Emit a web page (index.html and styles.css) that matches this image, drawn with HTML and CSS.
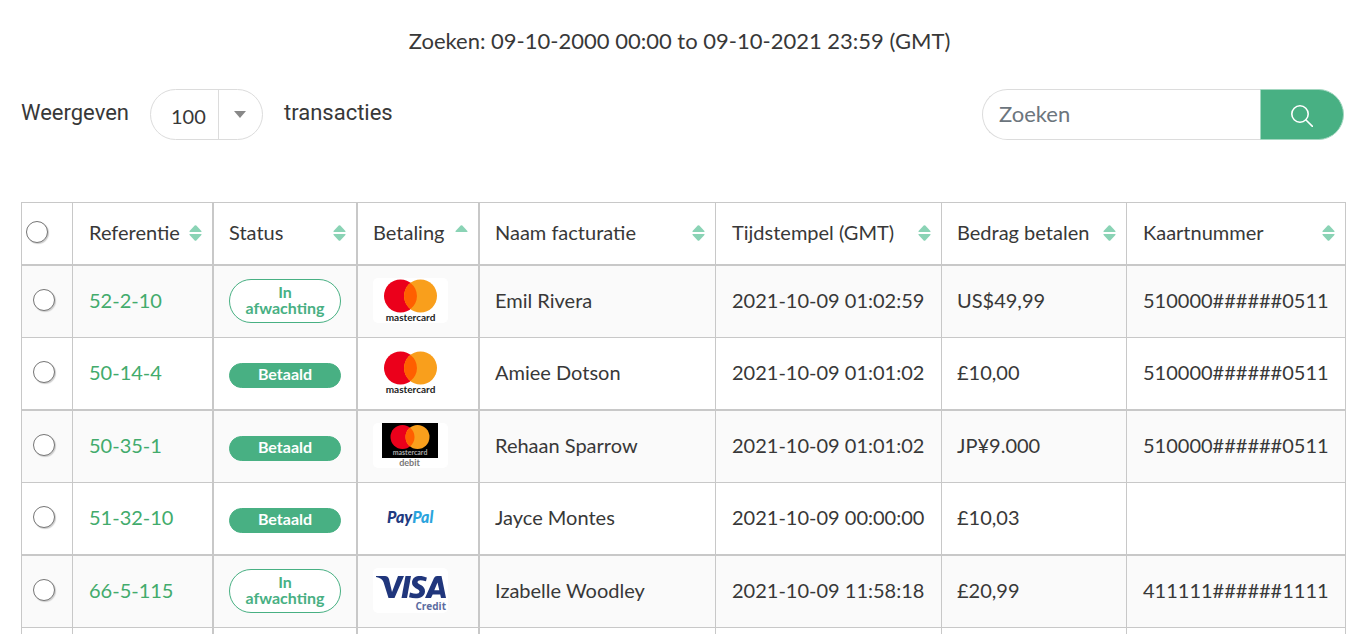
FILE: index.html
```html
<!DOCTYPE html>
<html lang="nl">
<head>
<meta charset="utf-8">
<title>Transacties</title>
<link rel="stylesheet" href="styles.css">
</head>
<body>
<svg width="0" height="0" class="defs" aria-hidden="true">
  <symbol id="sort" viewBox="0 0 13 16">
    <path d="M1 7 Q0 7 .6 6 L5.7.5 Q6.5 0 7.3.5L12.4 6 Q13 7 12 7Z"/>
    <path d="M1 9 Q0 9 .6 10 L5.7 15.5 Q6.5 16 7.3 15.5 L12.4 10 Q13 9 12 9Z"/>
  </symbol>
  <symbol id="sort-up" viewBox="0 0 13 16">
    <path d="M1 7 Q0 7 .6 6 L5.7.5 Q6.5 0 7.3.5 L12.4 6 Q13 7 12 7Z"/>
  </symbol>
</svg>

<main class="page">
  <p class="range">Zoeken: 09-10-2000 00:00 to 09-10-2021 23:59 (GMT)</p>

  <div class="toolbar">
    <div class="length">
      <label for="length">Weergeven</label>
      <div class="length-box">
        <select id="length"><option>100</option></select>
        <span class="length-arrow"><svg width="12" height="7" viewBox="0 0 12 7" aria-hidden="true"><path d="M0 0h12L6 7z"/></svg></span>
      </div>
      <span>transacties</span>
    </div>
    <form class="search">
      <input type="search" placeholder="Zoeken" aria-label="Zoeken">
      <button type="button" aria-label="Zoeken"><svg width="22" height="22" viewBox="0 0 22 22" aria-hidden="true"><circle cx="9" cy="9" r="8.2"/><path d="M15 15l6.5 6.5"/></svg></button>
    </form>
  </div>

  <table class="transactions">
    <colgroup><col class="c-pick"><col class="c-ref"><col class="c-status"><col class="c-pay"><col class="c-name"><col class="c-time"><col class="c-amount"><col class="c-card"></colgroup>
    <thead>
      <tr>
        <th class="pick"><input type="radio" name="all" aria-label="Alles"></th>
        <th><div class="head"><span>Referentie</span><svg class="sort"><use href="#sort"/></svg></div></th>
        <th><div class="head"><span>Status</span><svg class="sort"><use href="#sort"/></svg></div></th>
        <th><div class="head"><span>Betaling</span><svg class="sort"><use href="#sort-up"/></svg></div></th>
        <th><div class="head"><span>Naam facturatie</span><svg class="sort"><use href="#sort"/></svg></div></th>
        <th><div class="head"><span>Tijdstempel (GMT)</span><svg class="sort"><use href="#sort"/></svg></div></th>
        <th><div class="head"><span>Bedrag betalen</span><svg class="sort"><use href="#sort"/></svg></div></th>
        <th><div class="head"><span>Kaartnummer</span><svg class="sort"><use href="#sort"/></svg></div></th>
      </tr>
    </thead>
    <tbody>
      <tr>
        <td class="pick"><input type="radio" name="row" aria-label="52-2-10"></td>
        <td><a href="#">52-2-10</a></td>
        <td class="media"><span class="pill pending">In afwachting</span></td>
        <td class="media">
          <svg class="logo" viewBox="0 0 75 45">
            <rect width="75" height="45" rx="5" fill="#fff"/>
            <circle cx="27.5" cy="18" r="16.5" fill="#eb001b"/>
            <circle cx="47.5" cy="18" r="16.5" fill="#f99f1c"/>
            <path d="M37.5 4.9a16.5 16.5 0 0 1 0 26.2a16.5 16.5 0 0 1 0-26.2z" fill="#ff5f00"/>
            <text x="37.5" y="43" text-anchor="middle" class="logo-mc">mastercard</text>
          </svg>
        </td>
        <td>Emil Rivera</td><td>2021-10-09 01:02:59</td><td>US$49,99</td><td>510000######0511</td>
      </tr>
      <tr>
        <td class="pick"><input type="radio" name="row" aria-label="50-14-4"></td>
        <td><a href="#">50-14-4</a></td>
        <td class="media"><span class="pill paid">Betaald</span></td>
        <td class="media">
          <svg class="logo" viewBox="0 0 75 45">
            <rect width="75" height="45" rx="5" fill="#fff"/>
            <circle cx="27.5" cy="18" r="16.5" fill="#eb001b"/>
            <circle cx="47.5" cy="18" r="16.5" fill="#f99f1c"/>
            <path d="M37.5 4.9a16.5 16.5 0 0 1 0 26.2a16.5 16.5 0 0 1 0-26.2z" fill="#ff5f00"/>
            <text x="37.5" y="43" text-anchor="middle" class="logo-mc">mastercard</text>
          </svg>
        </td>
        <td>Amiee Dotson</td><td>2021-10-09 01:01:02</td><td>£10,00</td><td>510000######0511</td>
      </tr>
      <tr>
        <td class="pick"><input type="radio" name="row" aria-label="50-35-1"></td>
        <td><a href="#">50-35-1</a></td>
        <td class="media"><span class="pill paid">Betaald</span></td>
        <td class="media">
          <svg class="logo" viewBox="0 0 75 45">
            <rect width="75" height="45" rx="5" fill="#fff"/>
            <rect x="9" width="56" height="35" fill="#000"/>
            <circle cx="29.5" cy="14" r="12" fill="#eb001b"/>
            <circle cx="44.5" cy="14" r="12" fill="#f99f1c"/>
            <path d="M37 4.6a12 12 0 0 1 0 18.8a12 12 0 0 1 0-18.8z" fill="#ff5f00"/>
            <text x="37" y="32" text-anchor="middle" class="logo-mc-small">mastercard</text>
            <text x="36.5" y="43" text-anchor="middle" class="logo-debit">debit</text>
          </svg>
        </td>
        <td>Rehaan Sparrow</td><td>2021-10-09 01:01:02</td><td>JP¥9.000</td><td>510000######0511</td>
      </tr>
      <tr>
        <td class="pick"><input type="radio" name="row" aria-label="51-32-10"></td>
        <td><a href="#">51-32-10</a></td>
        <td class="media"><span class="pill paid">Betaald</span></td>
        <td class="media">
          <svg class="logo" viewBox="0 0 75 45">
            <rect width="75" height="45" rx="5" fill="#fff"/>
            <text x="14" y="28" class="logo-paypal"><tspan fill="#213a80">Pay</tspan><tspan fill="#2ba4dd">Pal</tspan></text>
          </svg>
        </td>
        <td>Jayce Montes</td><td>2021-10-09 00:00:00</td><td>£10,03</td><td></td>
      </tr>
      <tr>
        <td class="pick"><input type="radio" name="row" aria-label="66-5-115"></td>
        <td><a href="#">66-5-115</a></td>
        <td class="media"><span class="pill pending">In afwachting</span></td>
        <td class="media">
          <svg class="logo" viewBox="0 0 75 45">
            <rect width="75" height="45" rx="5" fill="#fff"/>
            <g fill="#20367c">
              <path d="M3 8h9q3 0 4 3l3 13 6-16h6l-9.5 22h-6L10.5 14Q9 10 3 9z"/>
              <path d="M32.500 8h5.500l-4 22h-5.500z"/>
              <path d="M54 8.700l-1 4.600q-8-2.600-8.600.7c0 2.500 8 3 7.600 9.500-.5 7-9 8-16 5.700l1-4.700q9 3 9.500-.7c.4-3-8-3.300-7.500-9.700.6-6.300 8-7.600 15-4.400z"/>
              <path d="M64 8h4.500L73 30h-5l-.8-3.500h-7.500L58 30h-6l9-20q1-2 3-2zm.5 6.500L61.300 22.300h5z"/>
            </g>
            <text x="73" y="42" text-anchor="end" class="logo-credit">Credit</text>
          </svg>
        </td>
        <td>Izabelle Woodley</td><td>2021-10-09 11:58:18</td><td>£20,99</td><td>411111######1111</td>
      </tr>
      <tr><td></td><td></td><td></td><td></td><td></td><td></td><td></td><td></td></tr>
    </tbody>
  </table>
</main>
</body>
</html>
```

FILE: styles.css
```css
* { box-sizing: border-box; }

body {
  margin: 0;
  background: #fff;
  color: #383838;
  font-family: Lato, "Open Sans", sans-serif;
  font-size: 20px;
}

.defs { position: absolute; }

.page {
  height: 100vh;
  overflow: hidden;
  padding: 25px 17px 0 21px;
}

.range {
  margin: 0 8px 0 0;
  text-align: center;
  font-size: 22px;
  line-height: 32px;
}

.toolbar {
  display: flex;
  justify-content: space-between;
  margin: 32px 2px 62px 0;
}

.length {
  display: flex;
  align-items: center;
  gap: 21px;
  font-family: Roboto, sans-serif;
  font-size: 22px;
}
.length label, .length > span { padding-bottom: 4px; }

.length-box {
  display: flex;
  width: 113px;
  height: 51px;
  border: 1px solid #dcdcdc;
  border-radius: 26px;
  overflow: hidden;
}
.length-box select {
  flex: 1;
  min-width: 0;
  appearance: none;
  border: 0;
  padding: 2px 0 0 20px;
  background: none;
  color: #383838;
  font: 20px Lato, sans-serif;
}
.length-arrow {
  display: flex;
  align-items: center;
  justify-content: center;
  width: 44px;
  border-left: 1px solid #dcdcdc;
}
.length-arrow path { fill: #888; }

.search { display: flex; width: 362px; height: 51px; }
.search input {
  flex: 1;
  min-width: 0;
  border: 1px solid #dcdcdc;
  border-right: 0;
  border-radius: 26px 0 0 26px;
  padding: 0 16px 2px;
  background: #fff;
  font: 22px Lato, sans-serif;
}
.search input::placeholder { color: #6c757d; }
.search button {
  display: flex;
  align-items: center;
  justify-content: center;
  width: 84px;
  padding: 3px 0 0;
  border: 1px solid #a3d7c0;
  border-radius: 0 26px 26px 0;
  background: #48b083;
}
.search button svg { fill: none; stroke: #fff; stroke-width: 1.6; stroke-linecap: round; }

.transactions {
  width: 100%;
  table-layout: fixed;
  border-collapse: separate;
  border-spacing: 0;
}
.c-pick { width: 52px; }
.c-ref { width: 141px; }
.c-status { width: 144px; }
.c-pay { width: 122px; }
.c-time { width: 226px; }
.c-amount { width: 185px; }
.c-card { width: 219px; }

th, td {
  height: 72px;
  padding: 0 0 4px 16px;
  border: 0 solid #c8c8c8;
  border-width: 0 1px 1px 0;
  text-align: left;
  vertical-align: middle;
  font-weight: 400;
  white-space: nowrap;
}
th { height: 64px; padding-bottom: 2px; border-top-width: 1px; border-bottom-width: 2px; }
th:first-child, td:first-child { border-left-width: 1px; }
th:nth-child(n+2):nth-child(-n+4), td:nth-child(n+2):nth-child(-n+4) { border-right-width: 2px; }
th:nth-child(n+3):nth-child(-n+5), td:nth-child(n+3):nth-child(-n+5) { padding-left: 15px; }
th:nth-child(7), td:nth-child(7) { padding-left: 15px; }
tbody tr:nth-child(odd) { background: #fafafa; }
tbody tr:nth-child(even) td { height: 73px; border-bottom-width: 2px; }
td.media { padding-bottom: 2px; }

.head {
  display: flex;
  align-items: center;
  justify-content: space-between;
  padding-right: 10px;
}
.head span { padding-bottom: 2px; }
.sort { width: 13px; height: 16px; fill: #8ad3b5; }

td.pick { padding: 0 0 2px 11px; }
th.pick { padding: 0 0 2px 4px; }
.pick input {
  display: block;
  appearance: none;
  width: 22px;
  height: 22px;
  margin: 0 0 2px;
  border: 1px solid #767676;
  border-radius: 50%;
  background: #fff;
  box-shadow: 1px 1px 1px #ccc;
}

a { color: #42ab6c; text-decoration: none; }

.pill {
  display: flex;
  align-items: center;
  justify-content: center;
  width: 112px;
  border: 1px solid #48b083;
  font-size: 16px;
  line-height: 16px;
  font-weight: 700;
  text-align: center;
  white-space: normal;
}
.pending { height: 44px; padding: 0 8px 2px; border-radius: 22px; background: #fff; color: #48b083; }
.paid { height: 25px; margin-top: 5px; padding-bottom: 2px; border-radius: 13px; background: #48b083; color: #fff; }

.logo { display: block; width: 75px; height: 45px; }
.logo-mc { font: 700 10px Lato, sans-serif; fill: #222; }
.logo-mc-small { font: 700 7px Lato, sans-serif; fill: #aaa; }
.logo-debit { font: 700 9px Lato, sans-serif; fill: #777; }
.logo-paypal { font: italic 900 16px Lato, sans-serif; }
.logo-credit { font: 700 10px "Open Sans", sans-serif; fill: #5b6ba0; }
```
